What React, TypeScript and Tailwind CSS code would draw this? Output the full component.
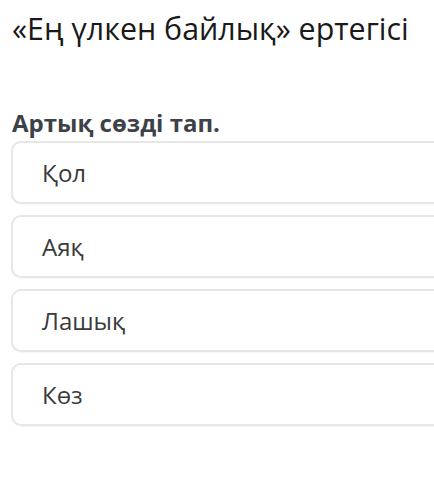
import React from "react";

const options = ["Қол", "Аяқ", "Лашық", "Көз"];

export default function App() {
  return (
    <div
      className="w-[434px] h-[480px] bg-white overflow-hidden pl-[11px]"
      style={{ fontFamily: '"Open Sans", "Noto Sans", sans-serif' }}
    >
      <h1 className="pt-[10px] pl-[1px] text-[30.4px] leading-[38px] font-normal text-[#1a1a1a] whitespace-nowrap">
        «Ең үлкен байлық» ертегісі
      </h1>
      <h2 className="mt-[61px] pl-[1px] text-[24px] leading-[28px] font-bold text-[#3d4148] whitespace-nowrap">
        Артық сөзді тап.
      </h2>
      <div className="mt-[4px] flex flex-col gap-[11px] w-[440px]">
        {options.map((o) => (
          <div
            key={o}
            className="h-[63px] rounded-[10px] border-2 border-[#e6e6e6] flex items-center pl-[29px] text-[24px] text-[#3a3a3a] shadow-[0_1px_1px_rgba(0,0,0,0.04)]"
          >
            {o}
          </div>
        ))}
      </div>
    </div>
  );
}
